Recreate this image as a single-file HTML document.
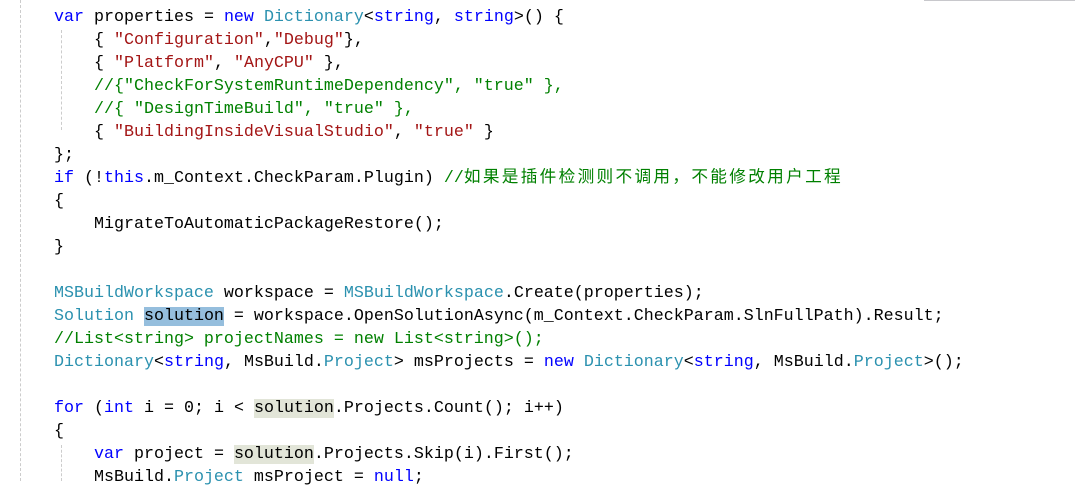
<!DOCTYPE html>
<html><head><meta charset="utf-8"><style>
body{margin:0;background:#fff;width:1075px;height:481px;overflow:hidden;position:relative}
pre{position:absolute;left:54px;top:6px;margin:0;font-family:"Liberation Mono","Noto Sans CJK SC",monospace;font-size:16.67px;line-height:23px;color:#000}
.k{color:#0000ff}.t{color:#2b91af}.s{color:#a31515}.c{color:#008000}
.cjk{letter-spacing:2.3px}
.sel{background:#95bedd}.hl{background:#e2e5d8}
.g1{position:absolute;left:20px;top:0;height:481px;border-left:1px dashed #ccc}
.g2{position:absolute;left:61px;top:30px;height:100px;border-left:1px dashed #ccc}
.g3{position:absolute;left:61px;top:445px;height:36px;border-left:1px dashed #ccc}
.top{position:absolute;left:924px;top:0;width:151px;height:1px;background:#c8c8cc}
</style></head><body>
<div class="g1"></div><div class="g2"></div><div class="g3"></div><div class="top"></div>
<pre><span class="k">var</span> properties = <span class="k">new</span> <span class="t">Dictionary</span>&lt;<span class="k">string</span>, <span class="k">string</span>&gt;() {
    { <span class="s">"Configuration"</span>,<span class="s">"Debug"</span>},
    { <span class="s">"Platform"</span>, <span class="s">"AnyCPU"</span> },
    <span class="c">//{"CheckForSystemRuntimeDependency", "true" },</span>
    <span class="c">//{ "DesignTimeBuild", "true" },</span>
    { <span class="s">"BuildingInsideVisualStudio"</span>, <span class="s">"true"</span> }
};
<span class="k">if</span> (!<span class="k">this</span>.m_Context.CheckParam.Plugin) <span class="c">//<span class="cjk">如果是插件检测则不调用，不能修改用户工程</span></span>
{
    MigrateToAutomaticPackageRestore();
}

<span class="t">MSBuildWorkspace</span> workspace = <span class="t">MSBuildWorkspace</span>.Create(properties);
<span class="t">Solution</span> <span class="sel">solution</span> = workspace.OpenSolutionAsync(m_Context.CheckParam.SlnFullPath).Result;
<span class="c">//List&lt;string&gt; projectNames = new List&lt;string&gt;();</span>
<span class="t">Dictionary</span>&lt;<span class="k">string</span>, MsBuild.<span class="t">Project</span>&gt; msProjects = <span class="k">new</span> <span class="t">Dictionary</span>&lt;<span class="k">string</span>, MsBuild.<span class="t">Project</span>&gt;();

<span class="k">for</span> (<span class="k">int</span> i = 0; i &lt; <span class="hl">solution</span>.Projects.Count(); i++)
{
    <span class="k">var</span> project = <span class="hl">solution</span>.Projects.Skip(i).First();
    MsBuild.<span class="t">Project</span> msProject = <span class="k">null</span>;
</pre>
</body></html>
